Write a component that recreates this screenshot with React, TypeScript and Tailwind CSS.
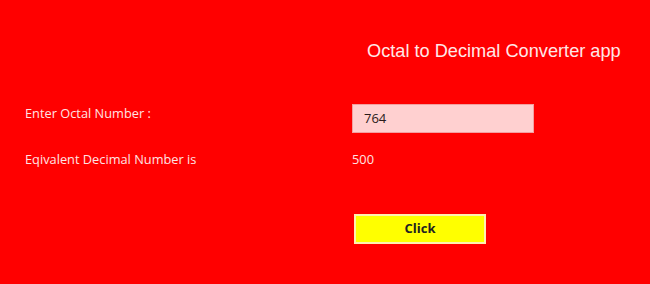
import React from "react";

export default function App() {
  return (
    <div className="w-[650px] h-[284px] bg-[#ff0000] overflow-hidden text-[#ffe4e4]" style={{ fontFamily: '"Open Sans", "Noto Sans", sans-serif' }}>
      <div className="flex pl-[367px] pt-[40px] h-[104px]">
        <div className="text-[18.2px] leading-[22px] text-[#ffe8e8]" style={{ fontFamily: '"Liberation Sans", Arial, sans-serif' }}>
          Octal to Decimal Converter app
        </div>
      </div>
      <div className="grid grid-cols-[327px_1fr] pl-[25px]">
        <div className="text-[12.8px] leading-[18px] pt-[0px]">Enter Octal Number :</div>
        <div>
          <div className="w-[182px] h-[29px] bg-[#ffd0d0] border border-[#f3a0a0] flex items-center pl-[11px] text-[13px] text-[#2a1a1a]">764</div>
        </div>
        <div className="text-[12.8px] leading-[18px] pt-[17px]">Eqivalent Decimal Number is</div>
        <div className="text-[12.8px] leading-[18px] pt-[17px]">500</div>
        <div></div>
        <div className="pt-[46px] pl-[2px]">
          <button className="w-[132px] h-[30px] bg-[#ffff00] border-2 border-[#fff0b0] flex items-center justify-center text-[13px] font-bold text-[#222]">
            Click
          </button>
        </div>
      </div>
    </div>
  );
}
